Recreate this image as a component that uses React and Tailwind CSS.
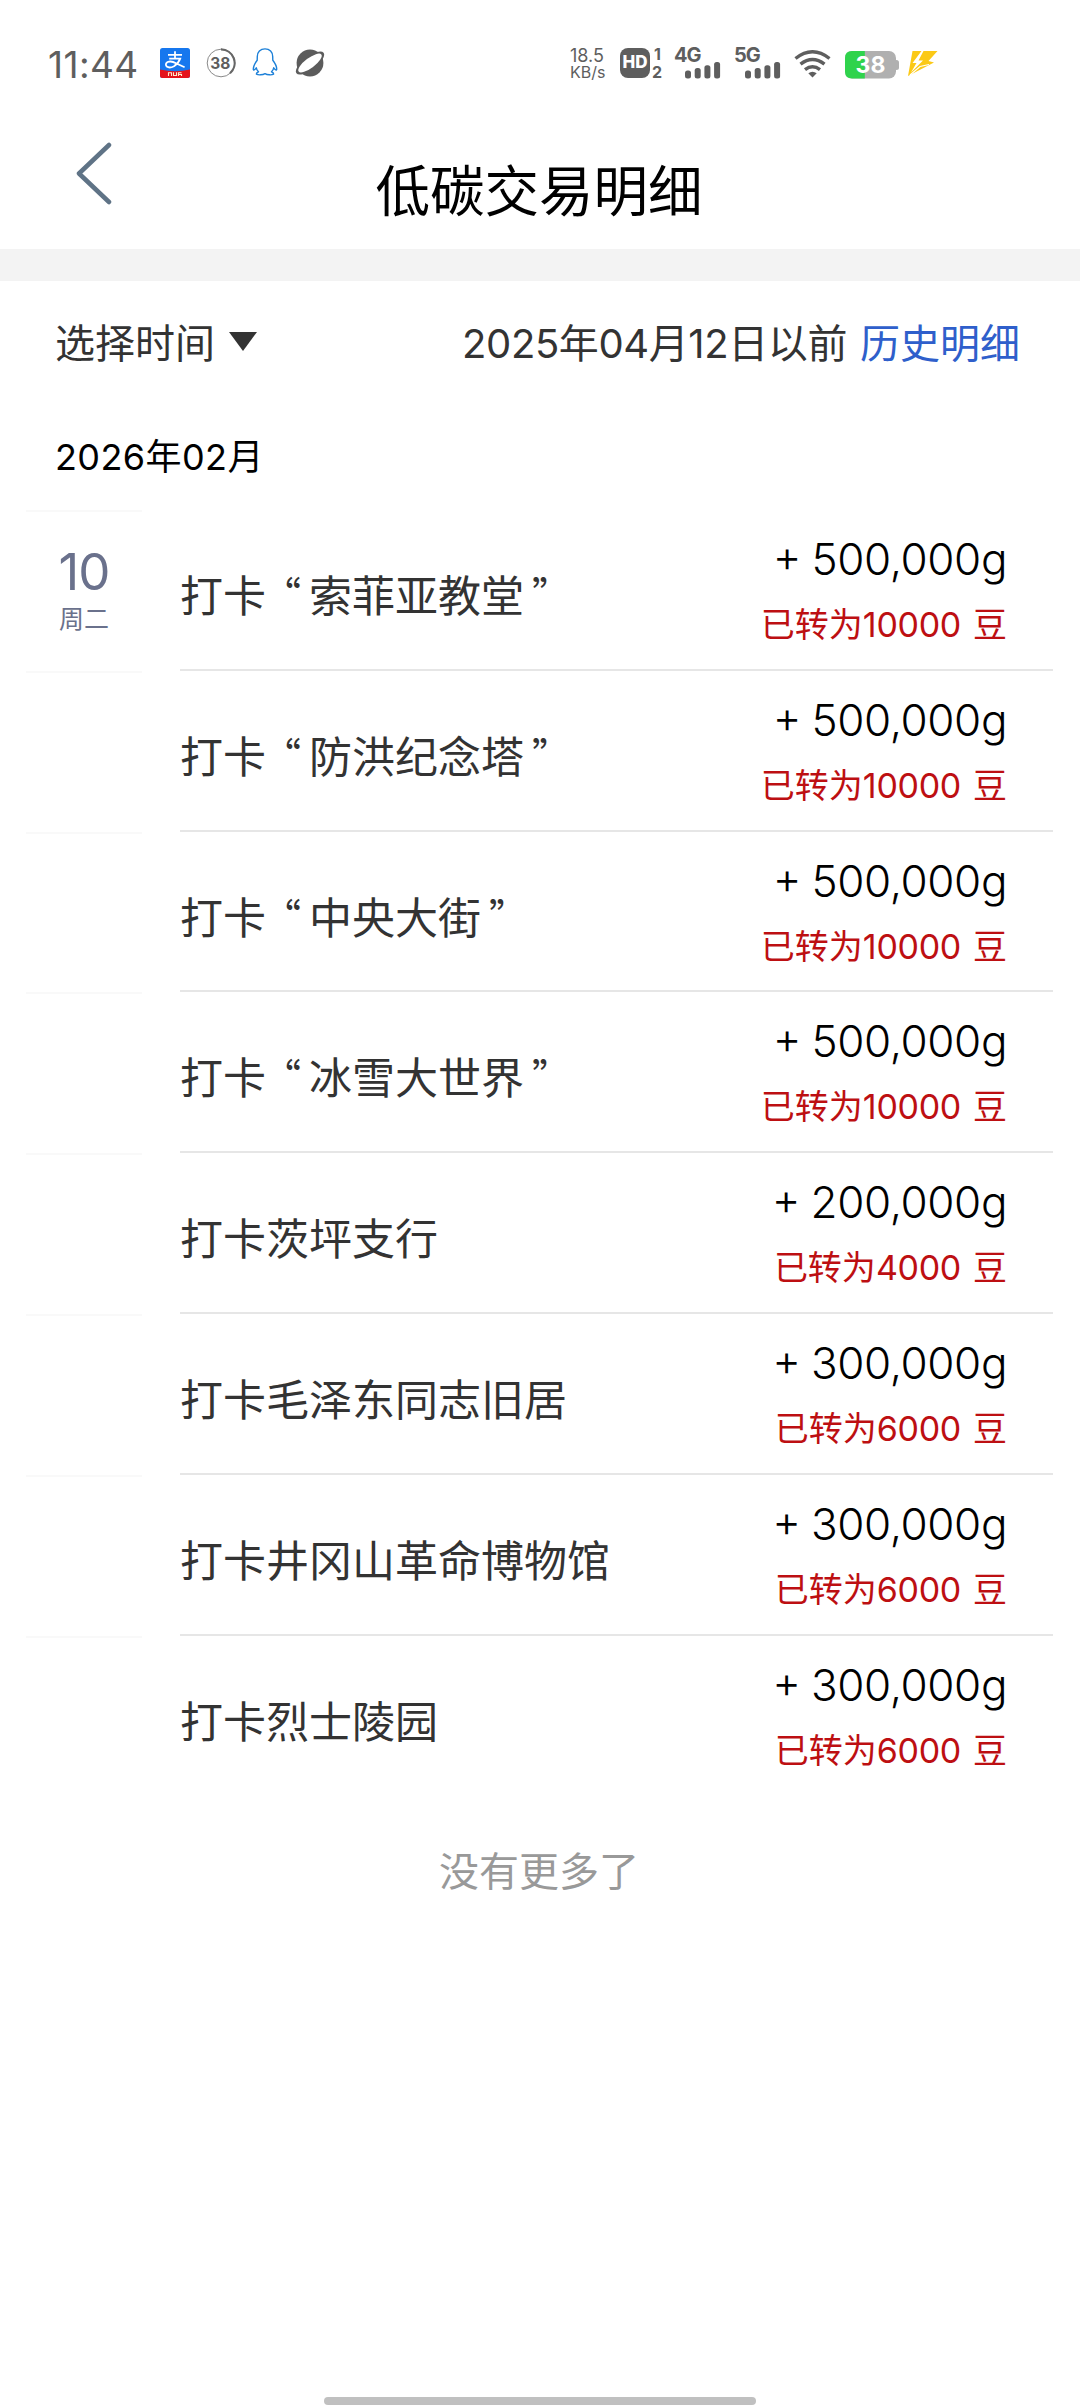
const records = [
  { day: "10", week: "周二", title: "打卡“索菲亚教堂”", amount: "500,000g", beans: "10000" },
  { title: "打卡“防洪纪念塔”", amount: "500,000g", beans: "10000" },
  { title: "打卡“中央大街”", amount: "500,000g", beans: "10000" },
  { title: "打卡“冰雪大世界”", amount: "500,000g", beans: "10000" },
  { title: "打卡茨坪支行", amount: "200,000g", beans: "4000" },
  { title: "打卡毛泽东同志旧居", amount: "300,000g", beans: "6000" },
  { title: "打卡井冈山革命博物馆", amount: "300,000g", beans: "6000" },
  { title: "打卡烈士陵园", amount: "300,000g", beans: "6000" },
];

function AlipayIcon() {
  return (
    <svg width="30" height="30" viewBox="0 0 30 30">
      <rect width="30" height="30" rx="2.5" fill="#1677ee" />
      <path d="M0 21.5Q15 25 30 21.5V27.5Q30 30 27.5 30H2.5Q0 30 0 27.5Z" fill="#e5121b" />
      <path d="M8 6.8H22M15 3.2V10.6M9.2 10.6H20.2Q18.6 15 14 18.2Q9.6 20.6 6.8 18.6Q4.6 16 7.6 14Q11.4 12.6 16 15.2L24.6 19.2" fill="none" stroke="#fff" strokeWidth="1.8" />
      <path d="M8.5 24.3V28M8.5 24.8H11.5V28M13.5 24.3V27.5H16.5V24.3M18.5 28V24.8H21.5M18.5 26.5H21.5V28" fill="none" stroke="#ffe9c9" strokeWidth="1.1" />
    </svg>
  );
}

function BatteryRing() {
  return (
    <svg width="30" height="30" viewBox="0 0 30 30">
      <circle cx="15" cy="15" r="13.8" fill="none" stroke="#8a8a8a" strokeWidth="1" />
      <path d="M15 1.4A13.6 13.6 0 0 1 24 25.2" fill="none" stroke="#666" strokeWidth="2.2" />
      <text x="14.4" y="20.5" textAnchor="middle" fontFamily="Inter" fontSize="15.5" fontWeight="700" fill="#5e5e5e">38</text>
    </svg>
  );
}

function PenguinIcon() {
  return (
    <svg width="26" height="28" viewBox="0 0 26 28" fill="none" stroke="#1d80d8" strokeWidth="1.4" strokeLinejoin="round">
      <path d="M13 .9C8.3 .9 5.3 4.2 5.3 8.5L5.2 12.2C3.5 14.4 1.2 18.2 1.3 21.2C1.4 22.7 2.6 22.2 4.3 19.8C4.6 21.5 5.5 22.8 6.5 23.8C4.9 24.4 4.2 25.1 4.5 26.2C6.2 27.2 10.8 27 13 25.6C15.2 27 19.8 27.2 21.5 26.2C21.8 25.1 21.1 24.4 19.5 23.8C20.5 22.8 21.4 21.5 21.7 19.8C23.4 22.2 24.6 22.7 24.7 21.2C24.8 18.2 22.5 14.4 20.8 12.2L20.7 8.5C20.7 4.2 17.7 .9 13 .9Z" />
    </svg>
  );
}

function PlanetIcon() {
  return (
    <svg width="32" height="30" viewBox="0 0 32 30">
      <circle cx="16" cy="15" r="13.4" fill="#5c5c5c" />
      <g transform="rotate(-37 16 15)">
        <ellipse cx="16" cy="15" rx="17" ry="6.6" fill="#5c5c5c" />
        <ellipse cx="16" cy="15" rx="14.2" ry="5" fill="#fff" />
      </g>
    </svg>
  );
}

function SignalBars() {
  return (
    <svg width="36" height="17" viewBox="0 0 36 17" fill="#5e5e5e">
      <rect x="0" y="8.5" width="6" height="8" rx="2.5" />
      <rect x="9.7" y="6" width="6" height="10.5" rx="2.5" />
      <rect x="19.4" y="3.3" width="6" height="13.2" rx="2.5" />
      <rect x="29.1" y="0" width="6" height="16.5" rx="2.5" />
    </svg>
  );
}

function WifiIcon() {
  return (
    <svg width="37" height="28" viewBox="0 0 37 28" fill="none" stroke="#5e5e5e" strokeWidth="3.4">
      <path d="M1.5 8.5Q18.5 -5 35.5 8.5" />
      <path d="M6.5 14.2Q18.5 4.8 30.5 14.2" />
      <path d="M11 19.6Q18.5 13.8 26 19.6" />
      <path d="M14.3 23.3Q18.5 20.2 22.7 23.3L18.5 27.6Z" fill="#5e5e5e" stroke="none" />
    </svg>
  );
}

function Battery() {
  return (
    <svg width="54" height="28" viewBox="0 0 54 28">
      <rect x="49" y="9" width="5" height="10" rx="2.5" fill="#b0b0b0" />
      <rect width="51" height="27.5" rx="7" fill="#b0b0b0" />
      <path d="M7 0H19.8V27.5H7Q0 27.5 0 20.5V7Q0 0 7 0Z" fill="#2fd34c" />
      <text x="25.5" y="22" textAnchor="middle" fontFamily="Inter" fontSize="23" fontWeight="700" fill="#fff">38</text>
    </svg>
  );
}

function Bolt() {
  return (
    <svg width="30" height="26" viewBox="0 0 30 26">
      <path d="M4.5 0H29.5L20.5 10L26 11.5L0 25Z" fill="#fbc916" />
      <path d="M13.5 0H15.5L10.5 9.5H15L3 21.5L8.5 12H4.5Z" fill="#fff" />
      <path d="M2 24L12 15.5L21 13.5" fill="none" stroke="#fff" strokeWidth="1.2" />
    </svg>
  );
}

function Network({ label }) {
  return (
    <div className="flex h-[30px] w-12 flex-col">
      <span className="h-3.5 text-[20px] leading-[14px] font-bold tracking-[-1px]">{label}</span>
      <div className="ml-[11px]">
        <SignalBars />
      </div>
    </div>
  );
}

function StatusBar() {
  return (
    <div className="flex h-[125px] items-start pt-12 pl-12 text-[#5e5e5e]">
      <span className="w-[112px] text-[37px] leading-[34px] tracking-[0.4px]">11:44</span>
      <AlipayIcon />
      <div className="ml-4"><BatteryRing /></div>
      <div className="ml-4"><PenguinIcon /></div>
      <div className="ml-4"><PlanetIcon /></div>
      <div className="ml-[244px] w-[50px]">
        <div className="h-[15px] text-[18px] leading-[15px]">18.5</div>
        <div className="mt-[2px] h-[15px] text-[16px] leading-[15px]">KB/s</div>
      </div>
      <div className="flex h-[30px] w-[30px] items-center justify-center rounded-lg bg-[#5e5e5e] text-[17px] font-extrabold text-white">HD</div>
      <div className="ml-0.5 w-[22px] text-[16px] leading-[16px] font-bold">
        <div className="pl-0.5 leading-[13px]">1</div>
        <div className="mt-1 leading-[15px]">2</div>
      </div>
      <Network label="4G" />
      <div className="ml-3"><Network label="5G" /></div>
      <div className="mt-0.5 ml-3"><WifiIcon /></div>
      <div className="mt-[3px] ml-3.5"><Battery /></div>
      <div className="mt-[3px] ml-[9px]"><Bolt /></div>
    </div>
  );
}

// Quotes are smaller than the text but keep a full character cell
function Title({ text }) {
  return text.split(/([“”])/).map((part, i) => {
    if (part === "“") {
      return <span key={i} className="inline-block w-[46px] -ml-[3px] align-[3px] text-[38px]">{part}</span>;
    }
    if (part === "”") {
      return <span key={i} className="ml-2 inline-block w-[38px] align-[3px] text-[38px]">{part}</span>;
    }
    return <span key={i}>{part}</span>;
  });
}

export default function App() {
  return (
    <div className="flex h-[2408px] w-[1080px] flex-col overflow-hidden bg-white font-['Inter','Noto_Sans_CJK_SC',sans-serif] text-black">
      <StatusBar />

      {/* Title bar */}
      <header className="grid h-[124px] grid-cols-[180px_1fr_180px] items-start">
        <svg className="mt-4 ml-[73px]" width="40" height="64" viewBox="0 0 40 64" fill="none" stroke="#5f7386" strokeWidth="4.5" strokeLinecap="round" strokeLinejoin="round">
          <path d="M36 4L6 32.5L36 61" />
        </svg>
        <h1 className="mt-8 pr-0.5 text-center text-[54.5px] leading-[68px]">低碳交易明细</h1>
      </header>
      <div className="h-8 bg-[#f3f3f3]" />

      {/* Filter */}
      <div className="flex h-[124px] items-center pt-0.5 pr-[60px] pl-[55px] text-[40px] text-[#333]">
        <span>选择时间</span>
        <svg className="mt-[-6px] ml-3.5" width="28" height="19" viewBox="0 0 28 19">
          <path d="M0 0H28L14 19Z" fill="#333" />
        </svg>
        <span className="ml-auto tracking-[-0.4px]">2025年04月12日以前</span>
        <span className="ml-[13px] text-[#2f5fcb]">历史明细</span>
      </div>

      <div className="flex h-[105px] items-center pb-0.5 pl-[55px] text-[36px] tracking-[0.4px]">2026年02月</div>

      {/* Records */}
      <div className="pr-[27px] pl-[26px]">
        {records.map((r, i) => (
          <div key={i} className="flex h-[160.83px] justify-between">
            <div className="flex w-[116px] flex-col items-center border-t-2 border-[#f9f9f9] pt-[35px] text-[#6a718c]">
              {r.day && <div className="text-[51px] leading-[50px] tracking-[-1px]">{r.day}</div>}
              {r.week && <div className="mt-[7px] text-[25px] leading-[30px]">{r.week}</div>}
            </div>
            <div className={`flex w-[873px] justify-between pr-[46px] ${i < records.length - 1 ? "border-b-2 border-[#e6e6e6]" : ""}`}>
              <div className="mt-[51px] h-16 text-[43px] leading-[64px] whitespace-nowrap font-['Noto_Sans_CJK_SC',sans-serif] text-[#333]">
                <Title text={r.title} />
              </div>
              <div className="mt-[22px] text-right">
                <div className="flex items-start justify-end gap-[10px] text-[44px] leading-[54px] font-light">
                  <span className="leading-[48px]">+</span>
                  <span className="tracking-[-0.4px]">{r.amount}</span>
                </div>
                <div className="mt-[18px] text-[34px] leading-[42px] text-[#bd0f12]">
                  已转为<span className="tracking-[-0.3px]">{r.beans}</span>
                  <span className="pl-3">豆</span>
                </div>
              </div>
            </div>
          </div>
        ))}
      </div>

      <div className="mt-[45px] pr-0.5 text-center text-[40px] leading-[60px] text-[#999]">没有更多了</div>

      <div className="mt-auto mb-[3px] h-2 w-[432px] self-center rounded-full bg-[#c0c0c0]" />
    </div>
  );
}
